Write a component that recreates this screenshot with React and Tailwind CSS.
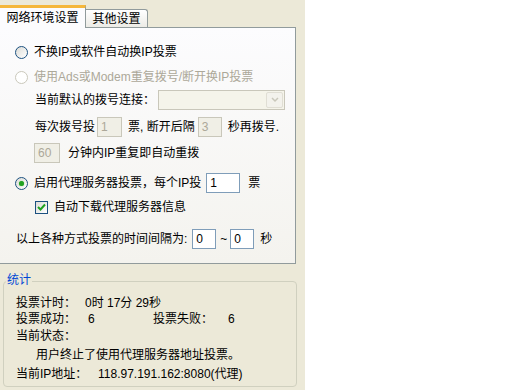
import React from "react";

const FONT = { fontFamily: '"Liberation Sans", "Noto Sans CJK SC", sans-serif' };

const Radio = ({ checked, disabled }) => (
  <span
    className={`relative inline-flex w-[13px] h-[13px] rounded-full border shrink-0 items-center justify-center ${
      disabled
        ? "border-[#cac8bb] bg-white"
        : "border-[#1c5180] bg-gradient-to-br from-[#dcdcd7] to-white"
    }`}
  >
    {checked && (
      <span className="w-[5px] h-[5px] rounded-full bg-[#21a121] shadow-[0_0_1px_#5ec85e]" />
    )}
  </span>
);

const Check = () => (
  <span className="inline-flex w-[13px] h-[13px] border border-[#1c5180] bg-gradient-to-br from-[#dcdcd7] to-white shrink-0 items-center justify-center">
    <svg width="9" height="9" viewBox="0 0 9 9">
      <path d="M1 4 L3.5 6.5 L8 1.5" fill="none" stroke="#21a121" strokeWidth="2" />
    </svg>
  </span>
);

const Input = ({ value, w, disabled }) => (
  <span
    className={`inline-flex h-[20px] items-center pl-[3px] border shrink-0 ${
      disabled
        ? "bg-[#f0efe6] border-[#c9c7ba] text-[#aca899]"
        : "bg-white border-[#7f9db9] text-black"
    }`}
    style={{ width: w }}
  >
    {value}
  </span>
);

export default function App() {
  return (
    <div className="w-[512px] h-[390px] bg-white flex text-[12px] text-black" style={FONT}>
      <div className="w-[305px] h-full bg-[#ece9d8] flex flex-col">
        {/* tabs */}
        <div className="flex items-end h-[28px] pt-[5px] relative z-10">
          <div className="w-[86px] h-[23px] bg-[#fcfcfe] border-t-[3px] border-t-[#f5b73b] border-r border-r-[#919b9c] flex items-center justify-center leading-none">
            网络环境设置
          </div>
          <div className="w-[62px] h-[18px] mb-[1px] bg-gradient-to-b from-white to-[#ecebe6] border border-[#919b9c] border-b-0 border-l-0 rounded-tr-[3px] flex items-center justify-center leading-none">
            其他设置
          </div>
        </div>

        {/* panel */}
        <div className="w-[296px] h-[237px] -mt-[1px] border border-[#919b9c] border-l-0 bg-gradient-to-b from-[#fcfcfe] to-[#f4f3ee] flex flex-col">
          <div className="flex items-center h-[20px] mt-[14px] pl-[15px] gap-[6px]">
            <Radio />
            <span>不换IP或软件自动换IP投票</span>
          </div>
          <div className="flex items-center h-[20px] mt-[5px] pl-[15px] gap-[6px] text-[#aca899]">
            <Radio disabled />
            <span>使用Ads或Modem重复拨号/断开换IP投票</span>
          </div>
          <div className="flex items-center h-[20px] mt-[3px] pl-[35px]">
            <span className="w-[123px]">当前默认的拨号连接：</span>
            <span className="w-[127px] h-[20px] border border-[#c9c7ba] bg-[#f5f4ea] flex justify-end items-stretch p-[1px]">
              <span className="w-[17px] bg-[#f3f2ec] border border-[#e0ded4] rounded-[2px] flex items-center justify-center">
                <svg width="8" height="6" viewBox="0 0 8 6">
                  <path d="M1 1 L4 4 L7 1" fill="none" stroke="#c9c7ba" strokeWidth="1.5" />
                </svg>
              </span>
            </span>
          </div>
          <div className="flex items-center h-[20px] mt-[7px] pl-[35px]">
            <span>每次拨号投</span>
            <span className="ml-[2px]"><Input value="1" w={25} disabled /></span>
            <span className="ml-[6px] whitespace-pre">票, 断开后隔</span>
            <span className="ml-[3px]"><Input value="3" w={24} disabled /></span>
            <span className="ml-[6px]">秒再拨号.</span>
          </div>
          <div className="flex items-center h-[20px] mt-[6px] pl-[34px]">
            <Input value="60" w={26} disabled />
            <span className="ml-[8px]">分钟内IP重复即自动重拨</span>
          </div>
          <div className="flex items-center h-[20px] mt-[10px] pl-[15px]">
            <Radio checked />
            <span className="ml-[6px]">启用代理服务器投票，每个IP投</span>
            <span className="ml-[5px]"><Input value="1" w={34} /></span>
            <span className="ml-[8px]">票</span>
          </div>
          <div className="flex items-center h-[20px] mt-[4px] pl-[35px]">
            <Check />
            <span className="ml-[6px]">自动下载代理服务器信息</span>
          </div>
          <div className="flex items-center h-[20px] mt-[12px] pl-[16px]">
            <span>以上各种方式投票的时间间隔为:</span>
            <span className="ml-[5px]"><Input value="0" w={24} /></span>
            <span className="ml-[4px] w-[10px]">~</span>
            <Input value="0" w={24} />
            <span className="ml-[6px]">秒</span>
          </div>
        </div>

        {/* stats group */}
        <div className="relative mt-[17px] ml-[3px] w-[294px] h-[106px] border border-[#d0d0bf] rounded-[4px] flex flex-col pl-[12px]">
          <span className="absolute -top-[10px] left-[2px] px-[1px] bg-[#ece9d8] text-[#0046d5] leading-[16px]">
            统计
          </span>
          <div className="flex h-[16px] items-center mt-[13px]">
            <span className="w-[69px]">投票计时：</span>
            <span>0时 17分 29秒</span>
          </div>
          <div className="flex h-[16px] items-center mt-[0px]">
            <span className="w-[72px]">投票成功：</span>
            <span className="w-[65px]">6</span>
            <span className="w-[75px]">投票失败：</span>
            <span>6</span>
          </div>
          <div className="flex h-[16px] items-center mt-[1px]">当前状态：</div>
          <div className="flex h-[16px] items-center mt-[3px] pl-[20px]">用户终止了使用代理服务器地址投票。</div>
          <div className="flex h-[16px] items-center mt-[3px]">
            <span className="w-[82px]">当前IP地址：</span>
            <span>118.97.191.162:8080(代理)</span>
          </div>
        </div>
      </div>
    </div>
  );
}
